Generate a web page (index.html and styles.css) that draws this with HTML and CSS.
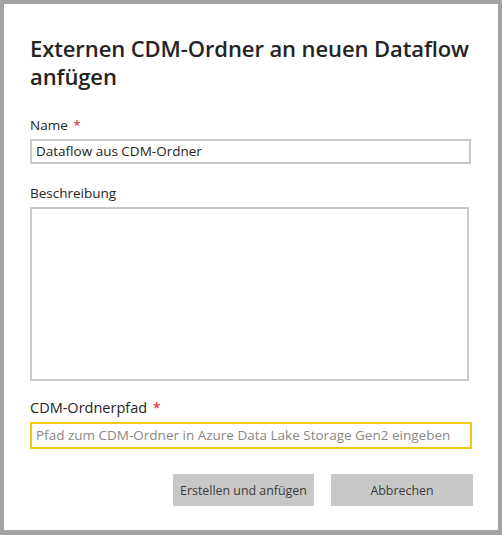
FILE: index.html
```html
<!DOCTYPE html>
<html lang="de">
<head>
<meta charset="utf-8">
<link rel="stylesheet" href="styles.css">
</head>
<body>
<div class="dialog">
  <h1 class="title">Externen CDM-Ordner an neuen Dataflow anfügen</h1>
  <div class="field">
    <label class="label">Name <span class="req">*</span></label>
    <div class="input">Dataflow aus CDM-Ordner</div>
  </div>
  <div class="field field-desc">
    <label class="label">Beschreibung</label>
    <div class="textarea"></div>
  </div>
  <div class="field field-path">
    <label class="label">CDM-Ordnerpfad <span class="req">*</span></label>
    <div class="input input-focus placeholder">Pfad zum CDM-Ordner in Azure Data Lake Storage Gen2 eingeben</div>
  </div>
  <div class="actions">
    <button class="btn btn-create">Erstellen und anfügen</button>
    <button class="btn btn-cancel">Abbrechen</button>
  </div>
</div>
</body>
</html>
```

FILE: styles.css
```css
html, body {
  margin: 0;
  padding: 0;
}
body {
  width: 502px;
  height: 535px;
  font-family: "Open Sans", "Noto Sans", sans-serif;
  color: #252423;
}
.dialog {
  box-sizing: border-box;
  width: 502px;
  height: 535px;
  border: 4px solid #a3a3a3;
  border-bottom-width: 5px;
  background: #ffffff;
  padding: 30px 26px 0 26px;
}
.title {
  margin: 0;
  font-size: 22px;
  font-weight: 600;
  line-height: 28px;
  color: #252423;
  letter-spacing: -0.1px;
}
.field {
  display: flex;
  flex-direction: column;
}
.title + .field {
  margin-top: 26px;
}
.label {
  font-size: 13.5px;
  line-height: 18px;
  color: #252423;
  margin-bottom: 5px;
}
.req {
  color: #e81123;
  margin-left: 2px;
}
.input {
  box-sizing: border-box;
  width: 441px;
  height: 25px;
  border: 2px solid #c8c8c8;
  padding: 0 4px;
  font-size: 13.5px;
  line-height: 21px;
  color: #252423;
  white-space: nowrap;
  overflow: hidden;
}
.field-desc {
  margin-top: 20px;
}
.textarea {
  box-sizing: border-box;
  width: 439px;
  height: 174px;
  border: 2px solid #c8c8c8;
}
.field-path {
  margin-top: 18px;
}
.field-path .label {
  font-size: 14.5px;
  margin-bottom: 5px;
}
.input-focus {
  width: 442px;
  height: 27px;
  border-color: #f2c811;
  line-height: 23px;
}
.placeholder {
  color: #8a8886;
}
.actions {
  display: flex;
  justify-content: flex-end;
  gap: 17px;
  margin-top: 25px;
  width: 443px;
}
.btn {
  box-sizing: border-box;
  width: 142px;
  height: 32px;
  border: none;
  background: #c8c8c8;
  font-family: "Open Sans", "Noto Sans", sans-serif;
  font-size: 12.4px;
  color: #3b3a39;
  padding: 0;
}
.btn-create {
  width: 141px;
}
```
